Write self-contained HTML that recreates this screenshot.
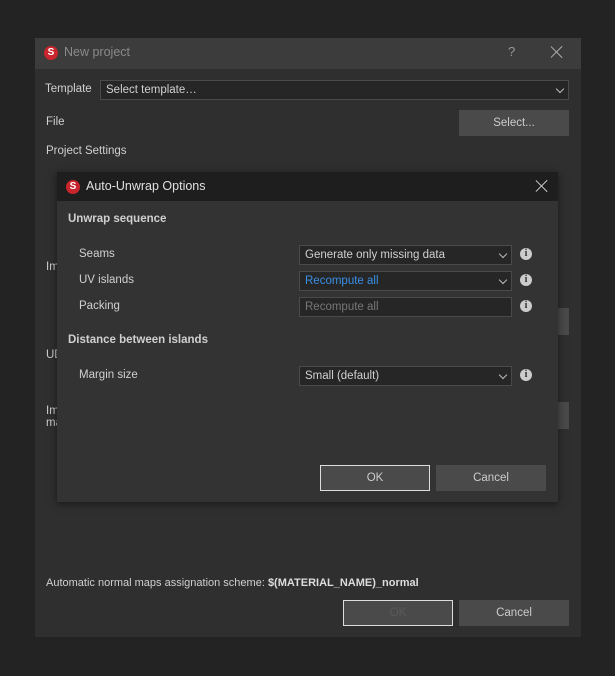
<!DOCTYPE html><html><head><style>
body{margin:0;width:615px;height:676px;background:#232323;font-family:"Liberation Sans",sans-serif;font-size:11.5px;color:#d0d0d0;position:relative;overflow:hidden}
.a{position:absolute}
.logo{position:absolute;width:14px;height:14px;border-radius:50%;background:#c8262c;color:#fff;font-weight:bold;font-size:10px;text-align:center;line-height:14px}
.sel{position:absolute;background:#262626;border:1px solid #4a4a4a;box-sizing:border-box;height:20px;line-height:18px;padding-left:5px}
.chev{position:absolute;right:5px;top:5px;width:5px;height:5px;border-right:1px solid #bbb;border-bottom:1px solid #bbb;transform:rotate(45deg)}
.info{position:absolute;width:12px;height:12px;border-radius:50%;background:#ccc;color:#333;font-weight:bold;font-size:10px;text-align:center;line-height:12px;font-family:"Liberation Serif",serif}
.btn{position:absolute;background:#4a4a4a;text-align:center;box-sizing:border-box;height:26px;line-height:26px;color:#ccc}
.x{position:absolute;width:14px;height:14px}
.x:before,.x:after{content:"";position:absolute;left:6px;top:-1px;width:1.3px;height:16px;background:#ccc;transform:rotate(45deg)}
.x:after{transform:rotate(-45deg)}
</style></head><body>
<div class="a" style="left:35px;top:38px;width:546px;height:599px;background:#2f2f2f"></div>
<div class="a" style="left:35px;top:38px;width:546px;height:31px;background:#3c3c3c"></div>
<div class="logo" style="left:44px;top:46px">S</div>
<div class="a" style="left:64px;top:45px;font-size:12.5px;color:#8a8a8a">New project</div>
<div class="a" style="left:508px;top:44px;color:#999;font-size:13px">?</div>
<div class="x" style="left:550px;top:45px;opacity:.8"></div>
<div class="a" style="left:45px;top:83px">Template</div>
<div class="sel" style="left:100px;top:80px;width:469px;height:20px">Select template…<div class="chev"></div></div>
<div class="a" style="left:46px;top:116px">File</div>
<div class="btn" style="left:459px;top:110px;width:110px">Select...</div>
<div class="a" style="left:46px;top:145px">Project Settings</div>
<div class="a" style="left:46px;top:261px">Im</div>
<div class="a" style="left:46px;top:349px">UD</div>
<div class="a" style="left:46px;top:405px;line-height:12px">Im<br>ma</div>
<div class="a" style="left:558px;top:308px;width:11px;height:27px;background:#4a4a4a"></div>
<div class="a" style="left:558px;top:402px;width:11px;height:27px;background:#4a4a4a"></div>
<div class="a" style="left:46px;top:577px;font-size:11px">Automatic normal maps assignation scheme: <b style="color:#ddd">$(MATERIAL_NAME)_normal</b></div>
<div class="btn" style="left:343px;top:600px;width:110px;border:1px solid #ddd;line-height:24px;color:#5a5a5a">OK</div>
<div class="btn" style="left:459px;top:600px;width:110px">Cancel</div>

<div class="a" style="left:57px;top:172px;width:501px;height:330px;background:#333;box-shadow:0 2px 8px rgba(0,0,0,.5)"></div>
<div class="a" style="left:57px;top:172px;width:501px;height:29px;background:#1e1e1e"></div>
<div class="logo" style="left:66px;top:180px">S</div>
<div class="a" style="left:86px;top:179px;font-size:12.5px;color:#e0e0e0">Auto-Unwrap Options</div>
<div class="x" style="left:535px;top:179px"></div>
<div class="a" style="left:68px;top:213px;font-weight:bold">Unwrap sequence</div>
<div class="a" style="left:79px;top:248px">Seams</div>
<div class="sel" style="left:299px;top:245px;width:213px">Generate only missing data<div class="chev"></div></div>
<div class="info" style="left:520px;top:248px">i</div>
<div class="a" style="left:79px;top:274px">UV islands</div>
<div class="sel" style="left:299px;top:271px;width:213px;color:#3a8ee6">Recompute all<div class="chev"></div></div>
<div class="info" style="left:520px;top:274px">i</div>
<div class="a" style="left:79px;top:300px">Packing</div>
<div class="sel" style="left:299px;top:297px;width:213px;color:#777">Recompute all</div>
<div class="info" style="left:520px;top:300px">i</div>
<div class="a" style="left:68px;top:334px;font-weight:bold">Distance between islands</div>
<div class="a" style="left:79px;top:369px">Margin size</div>
<div class="sel" style="left:299px;top:366px;width:213px">Small (default)<div class="chev"></div></div>
<div class="info" style="left:520px;top:369px">i</div>
<div class="btn" style="left:320px;top:465px;width:110px;border:1px solid #ddd;line-height:24px">OK</div>
<div class="btn" style="left:436px;top:465px;width:110px">Cancel</div>
</body></html>
